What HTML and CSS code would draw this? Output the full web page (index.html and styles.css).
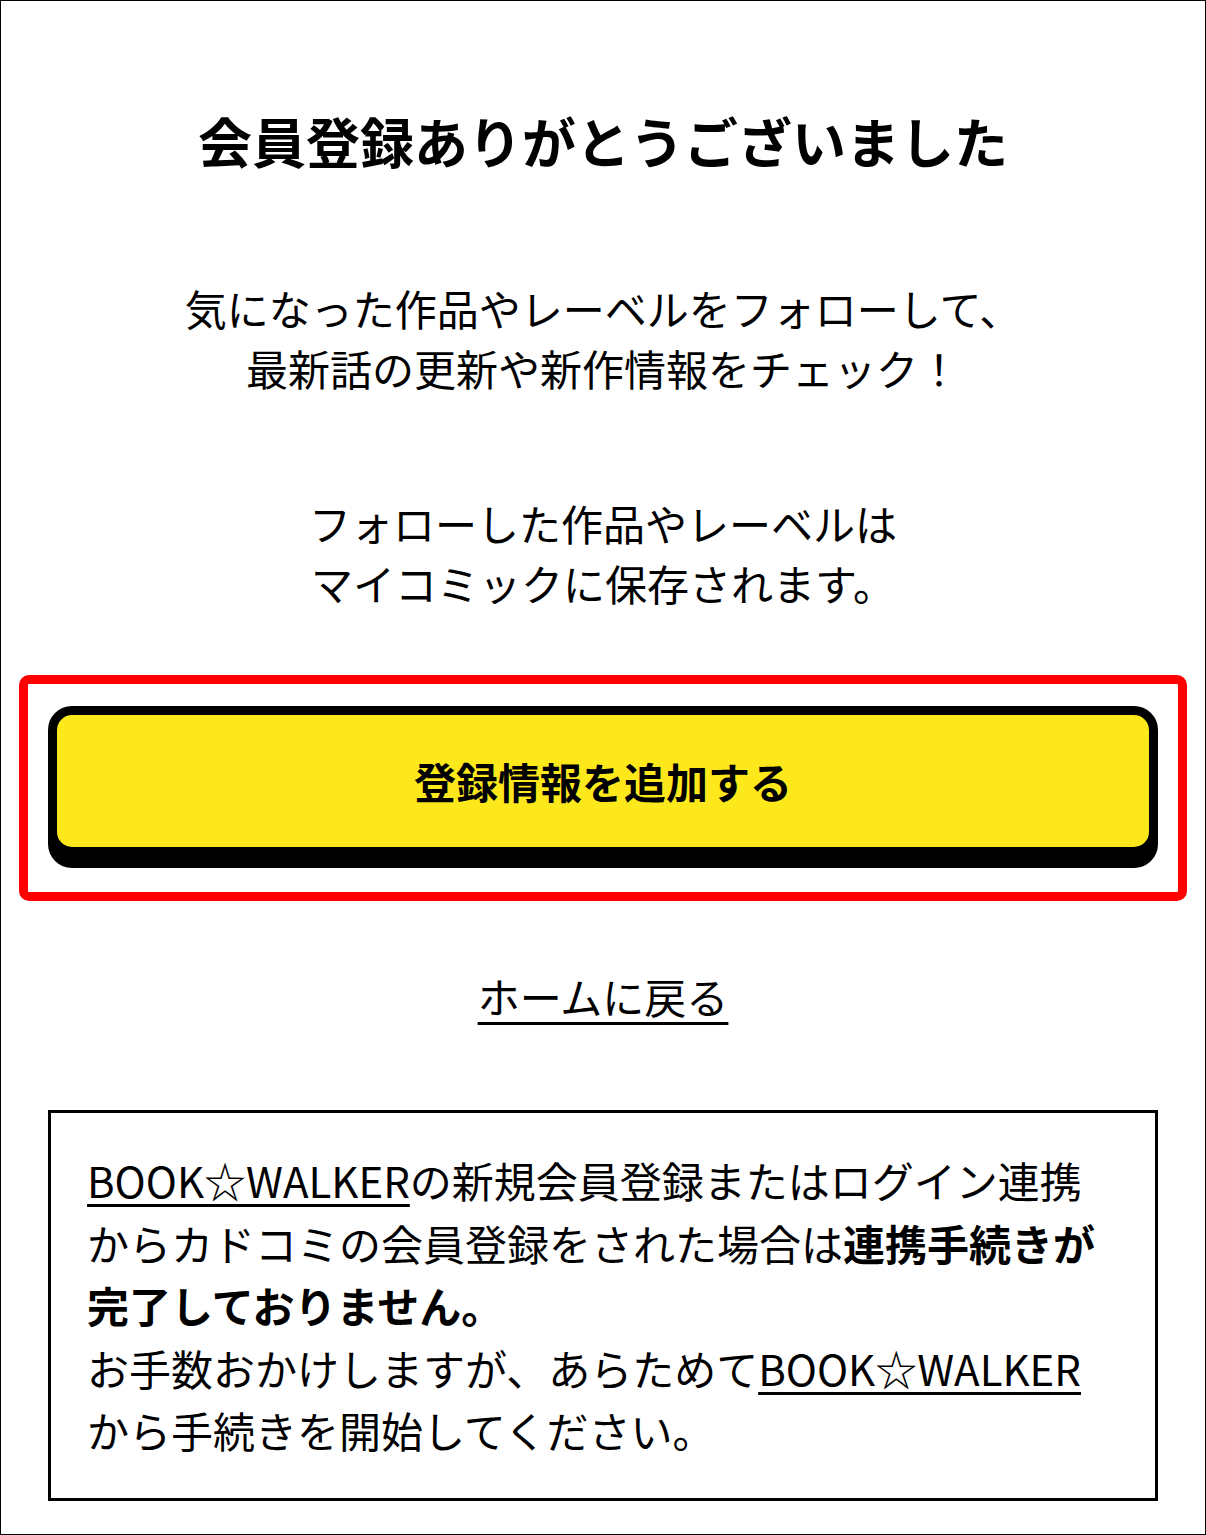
FILE: index.html
```html
<!DOCTYPE html>
<html lang="ja">
<head>
<meta charset="utf-8">
<title>会員登録ありがとうございました</title>
<link rel="stylesheet" href="styles.css">
</head>
<body>
<div class="frame">
  <h1 class="title">会員登録ありがとうございました</h1>
  <p class="lead">気になった作品やレーベルをフォローして、<br>最新話の更新や新作情報をチェック！</p>
  <p class="lead lead-second">フォローした作品やレーベルは<br>マイコミックに保存されます。</p>
  <div class="highlight">
    <a class="primary-btn" href="#">登録情報を追加する</a>
  </div>
  <div class="home-row"><a class="home-link" href="#">ホームに戻る</a></div>
  <div class="notice">
    <a class="notice-link" href="#">BOOK☆WALKER</a>の新規会員登録またはログイン連携からカドコミの会員登録をされた場合は<strong>連携手続きが完了しておりません。</strong><br>お手数おかけしますが、あらためて<a class="notice-link" href="#">BOOK☆WALKER</a>から手続きを開始してください。
  </div>
</div>
</body>
</html>
```

FILE: styles.css
```css
html, body {
  margin: 0;
  padding: 0;
  background: #fff;
}

body {
  font-family: "Noto Sans CJK JP", "Noto Sans", sans-serif;
  color: #000;
}

.frame {
  box-sizing: border-box;
  width: 1206px;
  height: 1535px;
  border: 1px solid #000;
  padding: 99px 47px 0;
}

.title {
  margin: 0;
  font-size: 54px;
  line-height: 81px;
  font-weight: 700;
  text-align: center;
}

.lead {
  margin: 97px 0 0;
  font-size: 42px;
  line-height: 60px;
  font-weight: 400;
  text-align: center;
}

.lead-second {
  margin-top: 95px;
}

.highlight {
  margin: 62px -29px 0;
  border: 9px solid #ff0000;
  border-radius: 10px;
  padding: 22px 20px 36px;
}

.primary-btn {
  display: block;
  box-sizing: border-box;
  height: 150px;
  border: 9px solid #000;
  border-radius: 24px;
  box-shadow: 0 12px 0 #000;
  background: #fde81c;
  color: #000;
  text-decoration: none;
  text-align: center;
  font-size: 42px;
  line-height: 132px;
  font-weight: 700;
}

.home-row {
  margin-top: 63px;
  text-align: center;
  font-size: 42px;
  line-height: 63px;
}

.home-link {
  color: #000;
  text-decoration: underline;
  text-decoration-thickness: 3px;
  text-underline-offset: 8px;
}

.notice {
  margin-top: 83px;
  border: 3px solid #000;
  padding: 36px;
  font-size: 42px;
  line-height: 62.5px;
}

.notice strong {
  font-weight: 700;
}

.notice-link {
  color: #000;
  text-decoration: underline;
  text-decoration-thickness: 3px;
  text-underline-offset: 6px;
}
```
